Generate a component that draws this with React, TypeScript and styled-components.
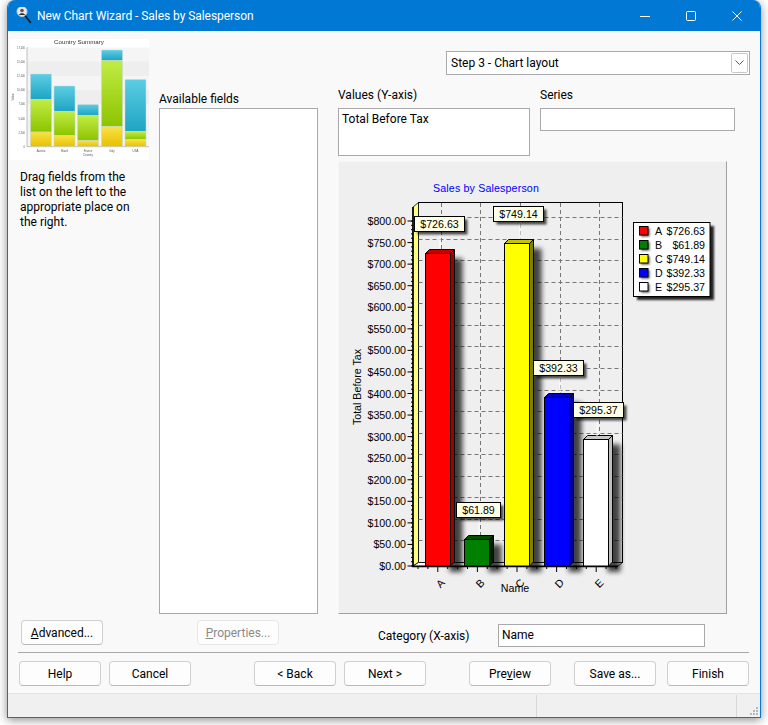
import styled, { createGlobalStyle } from "styled-components";

const GlobalStyle = createGlobalStyle`
    html, body {
        margin: 0;
        padding: 0;
        background: #ffffff;
        overflow: hidden;
    }
    * { box-sizing: border-box; }
`

const Page = styled.div`
    width: 768px;
    height: 725px;
    padding: 0 7px 7px 7px;
    font-family: Roboto, "Noto Sans", sans-serif;
    font-size: 12px;
    color: #000;
`

const Window = styled.div`
    display: flex;
    flex-direction: column;
    width: 754px;
    height: 718px;
    background: #f9f9f9;
    border: 1px solid #0078d4;
    border-top: none;
    border-radius: 8px 8px 0 0;
    box-shadow: 0 2px 10px rgba(0, 0, 0, 0.45);
    overflow: hidden;
`

const TitleBar = styled.div`
    display: flex;
    align-items: center;
    flex: none;
    height: 31px;
    padding-left: 8px;
    background: #0078d4;
    color: #fff;
    font-size: 12px;
`

const TitleText = styled.span`
    margin-left: 3px;
    flex: 1;
    letter-spacing: -0.05px;
`

const WindowButton = styled.div`
    display: flex;
    align-items: center;
    justify-content: center;
    width: 46px;
    height: 31px;
`

const Main = styled.div`
    display: grid;
    grid-template-columns: 151px 159px 1fr;
    grid-template-rows: 1fr;
    flex: 1;
    min-height: 0;
`

const LeftColumn = styled.div`
    display: flex;
    flex-direction: column;
    padding: 8px 0 7px 2px;
`

const Description = styled.p`
    width: 118px;
    margin: 10px 0 0 10px;
    line-height: 15px;
    flex: 1;
`

const MiddleColumn = styled.div`
    display: flex;
    flex-direction: column;
    padding-bottom: 7px;
`

const RightColumn = styled.div`
    display: flex;
    flex-direction: column;
    padding: 20px 0 0 20px;
`

const FieldLabel = styled.label`
    display: block;
    height: 16px;
    line-height: 16px;
`

const AvailableLabel = styled(FieldLabel)`
    margin-top: 60px;
    margin-bottom: 1px;
`

const Box = styled.div<{ $height?: number; $width?: number }>`
    height: ${(p) => (p.$height ? `${p.$height}px` : "auto")};
    width: ${(p) => (p.$width ? `${p.$width}px` : "auto")};
    padding: 2px 3px;
    line-height: 17px;
    background: #fff;
    border: 1px solid #a9a9ad;
`

const FieldList = styled(Box)`
    flex: 1;
    min-height: 0;
    margin-bottom: 6px;
`

const StepSelect = styled.div`
    display: flex;
    align-items: center;
    justify-content: space-between;
    align-self: flex-start;
    width: 304px;
    height: 24px;
    margin-left: 108px;
    padding: 0 1px 1px 4px;
    background: #fff;
    border: 1px solid #a9a9ad;
`

const SelectArrow = styled.div`
    display: flex;
    align-items: center;
    justify-content: center;
    width: 17px;
    height: 20px;
    margin-top: 1px;
    background: #fff;
    border: 1px solid #c8c8c8;
    border-radius: 2px;
`

const FieldRow = styled.div`
    display: grid;
    grid-template-columns: 192px 195px;
    column-gap: 10px;
    height: 75px;
    margin-top: 11px;
`

const FieldLabelTall = styled(FieldLabel)`
    margin-top: 1px;
    margin-bottom: 5px;
`

const ChartPanel = styled.div`
    flex: none;
    width: 389px;
    height: 453px;
    background: #efefef;
    border-top: 1px solid #f6f6f6;
    border-left: 1px solid #f6f6f6;
    border-right: 1px solid #a0a0a0;
    border-bottom: 1px solid #a0a0a0;

    svg {
        display: block;
    }
`

const CategoryRow = styled.div`
    display: flex;
    align-items: center;
    height: 23px;
    margin-top: 10px;
    padding-left: 40px;
`

const CategoryLabel = styled.label`
    width: 120px;
`

const Button = styled.button`
    width: 82px;
    height: 25px;
    padding: 0;
    font-family: inherit;
    font-size: 12px;
    color: ${(p) => (p.disabled ? "#8a8a8a" : "#000")};
    background: #fdfdfd;
    border: 1px solid ${(p) => (p.disabled ? "#e6e6e6" : "#d0d0d0")};
    border-bottom-color: ${(p) => (p.disabled ? "#e6e6e6" : "#b8b8b8")};
    border-radius: 4px;

    u {
        text-underline-offset: 1px;
    }
`

const AdvancedButton = styled(Button)`
    margin-left: 11px;
`

const PropertiesButton = styled(Button)`
    align-self: flex-start;
    margin-left: 38px;
`

const Footer = styled.div`
    flex: none;
    margin: 0 11px 0 10px;
    height: 41px;
    padding: 8px 0 0 1px;
    display: flex;
    border-top: 1px solid #a8a8a8;
`

const FooterButton = styled(Button)<{ $gap: number }>`
    margin-left: ${(p) => p.$gap}px;
`

const StatusBar = styled.div`
    display: grid;
    grid-template-columns: 529px 200px 1fr;
    flex: none;
    height: 24px;
    padding-top: 1px;
    background: #f0f0f0;
    border-top: 1px solid #e2e2e2;
`

const StatusPane = styled.div`
    display: flex;
    align-items: flex-end;
    justify-content: flex-end;
    border-right: 1px solid #d8d8d8;

    &:last-child {
        border-right: none;
        padding: 0 1px 1px 0;
    }
`

const ThumbSvg = styled.svg`
    display: block;
    flex: none;
    filter: blur(0.3px);
`

const values = [800, 750, 700, 650, 600, 550, 500, 450, 400, 350, 300, 250, 200, 150, 100, 50, 0]
const yOf = (v: number) => 566 - v * 0.43125

const bars = [
    { name: "A", value: "$726.63", x: 425.5, top: 253.5, face: "#ff0000", lid: "#c40000", side: "#a00000" },
    { name: "B", value: "$61.89", x: 464.5, top: 539.5, face: "#008000", lid: "#004d00", side: "#001f00" },
    { name: "C", value: "$749.14", x: 504.5, top: 243.5, face: "#ffff00", lid: "#c4c400", side: "#808000" },
    { name: "D", value: "$392.33", x: 544.5, top: 397.5, face: "#0000ff", lid: "#0000c4", side: "#0000a0" },
    { name: "E", value: "$295.37", x: 583.5, top: 439.5, face: "#ffffff", lid: "#c8c8c8", side: "#c0c0c0" },
]

const callouts = [
    { text: "$726.63", x: 414.5, y: 216.5, w: 50, lead: 440, to: 249 },
    { text: "$61.89", x: 456.5, y: 502.5, w: 44, lead: 479, to: 535 },
    { text: "$749.14", x: 493.5, y: 206.5, w: 50, lead: 520, to: 239 },
    { text: "$392.33", x: 533.5, y: 360.5, w: 50, lead: 560, to: 393 },
    { text: "$295.37", x: 573.5, y: 402.5, w: 50, lead: 597, to: 436 },
]

const legend = [
    { name: "A", value: "$726.63", color: "#ff0000" },
    { name: "B", value: "$61.89", color: "#008000" },
    { name: "C", value: "$749.14", color: "#ffff00" },
    { name: "D", value: "$392.33", color: "#0000ff" },
    { name: "E", value: "$295.37", color: "#ffffff" },
]

const backX = [441, 480, 520, 560, 599]
const minorY = Array.from({ length: 81 }, (_, i) => 566 - i * 4.3125)
const xTicks = Array.from({ length: 21 }, (_, i) => 418 + i * 9.9)

function SalesChart() {
    return (
        <svg width="387" height="451" viewBox="339 162 387 451" fontFamily="'Liberation Sans', Arial, sans-serif" fontSize="10.67">
            <defs>
                <filter id="soft" x="-60%" y="-40%" width="220%" height="180%">
                    <feGaussianBlur stdDeviation="2.4" />
                </filter>
                <filter id="softSmall" x="-40%" y="-40%" width="180%" height="180%">
                    <feGaussianBlur stdDeviation="1.2" />
                </filter>
            </defs>

            <text x="486" y="192" fill="#0000ff" textAnchor="middle" letterSpacing="0.15">Sales by Salesperson</text>
            <text transform="translate(361 387) rotate(-90)" textAnchor="middle">Total Before Tax</text>

            {/* back wall, left wall, floor */}
            <rect x="418.5" y="202.5" width="204" height="360" fill="#efefef" stroke="#000" />
            <polygon points="413,207 418.5,202.5 418.5,562.5 413,566" fill="#ffff80" stroke="#000" strokeWidth="0.8" />
            <polygon points="413,566 418.5,562.5 622.5,562.5 618,566" fill="#ffffff" stroke="#000" strokeWidth="0.8" />

            {values.slice(0, -1).map((v) => (
                <path
                    key={v}
                    d={`M418.5 ${Math.round(yOf(v) - 4) + 0.5}H622.5`}
                    fill="none"
                    stroke="#777"
                    strokeDasharray="4 3"
                />
            ))}
            {backX.map((x) => (
                <path key={x} d={`M${x + 0.5} 203V562`} stroke="#777" strokeDasharray="4 3" fill="none" />
            ))}

            {/* left axis with its ticks */}
            <path d="M413 207V566.5H618" fill="none" stroke="#000" strokeWidth="1.6" />
            {minorY.map((y) => (
                <path key={y} d={`M411 ${y}H413`} stroke="#000" />
            ))}
            {values.map((v) => (
                <g key={v}>
                    <path d={`M407.5 ${yOf(v)}H413`} stroke="#000" />
                    <text x="406" y={yOf(v) + 4} textAnchor="end">${v}.00</text>
                </g>
            ))}
            {xTicks.map((x, i) => (
                <path key={x} d={`M${x} 566V${i % 4 === 2 ? 572 : 569}`} stroke="#000" />
            ))}

            {/* bar shadows go under every bar */}
            {bars.map((b) => (
                <rect key={b.name} x={b.x + 24} y={b.top + 5} width="13" height={572 - b.top - 5} fill="#000" opacity="0.72" filter="url(#soft)" />
            ))}
            {bars.map((b) => (
                <g key={b.name} stroke="#000">
                    <polygon points={`${b.x},${b.top} ${b.x + 4},${b.top - 4} ${b.x + 29},${b.top - 4} ${b.x + 25},${b.top}`} fill={b.lid} />
                    <polygon points={`${b.x + 25},${b.top} ${b.x + 29},${b.top - 4} ${b.x + 29},562 ${b.x + 25},566`} fill={b.side} />
                    <rect x={b.x} y={b.top} width="25" height={566 - b.top} fill={b.face} />
                </g>
            ))}

            {callouts.map((c) => (
                <g key={c.text}>
                    <path d={`M${c.lead} ${c.y + 15}V${c.to}`} stroke="#fff" />
                    <rect x={c.x + 3} y={c.y + 3} width={c.w} height="15" fill="#000" opacity="0.7" filter="url(#softSmall)" />
                    <rect x={c.x} y={c.y} width={c.w} height="15" fill="#ffffe8" stroke="#000" />
                    <text x={c.x + c.w / 2} y={c.y + 11.5} textAnchor="middle">{c.text}</text>
                </g>
            ))}

            {/* legend */}
            <rect x="637" y="226" width="77" height="74" fill="#000" opacity="0.85" filter="url(#softSmall)" />
            <rect x="633.5" y="222.5" width="76.5" height="74" fill="#fff" stroke="#000" />
            {legend.map((l, i) => (
                <g key={l.name}>
                    <rect x="641" y={228 + i * 14} width="8.5" height="8.5" fill="#000" opacity="0.7" filter="url(#softSmall)" />
                    <rect x="639.5" y={226.5 + i * 14} width="8.5" height="8.5" fill={l.color} stroke="#000" />
                    <text x="655" y={235 + i * 14}>{l.name}</text>
                    <text x="705" y={235 + i * 14} textAnchor="end">{l.value}</text>
                </g>
            ))}

            {bars.map((b, i) => (
                <text key={b.name} transform={`translate(${441 + i * 39.7} 584) rotate(-45)`} textAnchor="middle" dominantBaseline="middle">{b.name}</text>
            ))}
            <text x="515" y="592" textAnchor="middle">Name</text>
        </svg>
    )
}

const thumbBars = [
    { x: 30.5, top: 74, mid: 99.5, low: 132 },
    { x: 54, top: 86, mid: 111.5, low: 135.5 },
    { x: 77.5, top: 104.5, mid: 115.5, low: 140.5 },
    { x: 101.5, top: 50, mid: 60.5, low: 126.5 },
    { x: 125, top: 79.5, mid: 131.5, low: 139.5 },
]
const thumbLabels = ["Austria", "Brazil", "France", "Italy", "USA"]
const thumbTicks = ["17,500", "15,000", "12,500", "10,000", "7,500", "5,000", "2,500", "0"]

function ThumbChart() {
    return (
        <ThumbSvg width="139" height="121" viewBox="10 39 139 121" fontFamily="'Liberation Sans', Arial, sans-serif">
            <defs>
                <linearGradient id="tBlue" x1="0" y1="0" x2="0" y2="1">
                    <stop offset="0" stopColor="#5ccde4" />
                    <stop offset="1" stopColor="#1ea4c2" />
                </linearGradient>
                <linearGradient id="tGreen" x1="0" y1="0" x2="0" y2="1">
                    <stop offset="0" stopColor="#c2ec45" />
                    <stop offset="1" stopColor="#8cc400" />
                </linearGradient>
                <linearGradient id="tYellow" x1="0" y1="0" x2="0" y2="1">
                    <stop offset="0" stopColor="#f8e245" />
                    <stop offset="1" stopColor="#e8c000" />
                </linearGradient>
            </defs>
            <rect x="10" y="39" width="139" height="121" fill="#fff" />
            <text x="79" y="43.5" fontSize="6.2" textAnchor="middle" fill="#333">Country Summary</text>
            <rect x="27" y="47.5" width="122" height="99" fill="#f5f5f5" />
            <rect x="27" y="61.6" width="122" height="14.2" fill="#eeeeee" />
            <rect x="27" y="90" width="122" height="14.2" fill="#eeeeee" />
            <rect x="27" y="118.4" width="122" height="14.2" fill="#f1f1f1" />
            <path d="M27 146.7H149M27 47V147" stroke="#999" strokeWidth="0.6" />
            {thumbTicks.map((t, i) => (
                <text key={t} x="25" y={48.5 + i * 14.2} fontSize="2.6" textAnchor="end" fill="#555">{t}</text>
            ))}
            <text transform="translate(13.5 97) rotate(-90)" fontSize="2.8" textAnchor="middle" fill="#555">Value</text>
            {thumbBars.map((b) => (
                <g key={b.x} stroke="#c8d8d8" strokeWidth="0.5">
                    <rect x={b.x} y={b.top} width="21" height={b.mid - b.top} rx="1" fill="url(#tBlue)" />
                    <rect x={b.x} y={b.mid} width="21" height={b.low - b.mid} fill="url(#tGreen)" />
                    <rect x={b.x} y={b.low} width="21" height={146.5 - b.low} fill="url(#tYellow)" />
                </g>
            ))}
            {thumbBars.map((b, i) => (
                <text key={b.x} x={b.x + 10.5} y="151.5" fontSize="2.8" textAnchor="middle" fill="#555">{thumbLabels[i]}</text>
            ))}
            <text x="88" y="156" fontSize="2.8" textAnchor="middle" fill="#555">Country</text>
        </ThumbSvg>
    )
}

function WizardIcon() {
    return (
        <svg width="18" height="18" viewBox="0 0 18 18">
            <path d="M9 8.5L14.5 15.5" stroke="#111" strokeWidth="1.5" strokeLinecap="round" />
            <circle cx="6" cy="4.5" r="5" fill="#e4e9ef" stroke="#c8d0d8" />
            <circle cx="6" cy="3.5" r="1.8" fill="#7a4a35" />
            <path d="M3 8C3.5 5.8 8.5 5.8 9 8Z" fill="#3a2420" />
        </svg>
    )
}

function App() {
    return (
        <Page>
            <GlobalStyle />
            <Window>
                <TitleBar>
                    <WizardIcon />
                    <TitleText>New Chart Wizard - Sales by Salesperson</TitleText>
                    <WindowButton>
                        <svg width="10" height="10" viewBox="0 0 10 10"><path d="M0 5.5H10" stroke="#fff" /></svg>
                    </WindowButton>
                    <WindowButton>
                        <svg width="10" height="10" viewBox="0 0 10 10"><rect x="0.5" y="0.5" width="9" height="9" rx="1" fill="none" stroke="#fff" /></svg>
                    </WindowButton>
                    <WindowButton>
                        <svg width="10" height="10" viewBox="0 0 10 10"><path d="M0.5 0.5L9.5 9.5M9.5 0.5L0.5 9.5" stroke="#fff" /></svg>
                    </WindowButton>
                </TitleBar>
                <Main>
                    <LeftColumn>
                        <ThumbChart />
                        <Description>Drag fields from the list on the left to the appropriate place on the right.</Description>
                        <AdvancedButton><u>A</u>dvanced...</AdvancedButton>
                    </LeftColumn>
                    <MiddleColumn>
                        <AvailableLabel>Available fields</AvailableLabel>
                        <FieldList />
                        <PropertiesButton disabled><u>P</u>roperties...</PropertiesButton>
                    </MiddleColumn>
                    <RightColumn>
                        <StepSelect>
                            Step 3 - Chart layout
                            <SelectArrow>
                                <svg width="9" height="6" viewBox="0 0 9 6"><path d="M0.5 0.5L4.5 4.5L8.5 0.5" fill="none" stroke="#555" /></svg>
                            </SelectArrow>
                        </StepSelect>
                        <FieldRow>
                            <div>
                                <FieldLabelTall>Values (Y-axis)</FieldLabelTall>
                                <Box $height={48}>Total Before Tax</Box>
                            </div>
                            <div>
                                <FieldLabelTall>Series</FieldLabelTall>
                                <Box $height={23} />
                            </div>
                        </FieldRow>
                        <ChartPanel>
                            <SalesChart />
                        </ChartPanel>
                        <CategoryRow>
                            <CategoryLabel>Category (X-axis)</CategoryLabel>
                            <Box $height={23} $width={207}>Name</Box>
                        </CategoryRow>
                    </RightColumn>
                </Main>
                <Footer>
                    <FooterButton $gap={0}>Help</FooterButton>
                    <FooterButton $gap={8}>Cancel</FooterButton>
                    <FooterButton $gap={63}>&lt; Back</FooterButton>
                    <FooterButton $gap={8}>Next &gt;</FooterButton>
                    <FooterButton $gap={43}>Pre<u>v</u>iew</FooterButton>
                    <FooterButton $gap={23}>Save as...</FooterButton>
                    <FooterButton $gap={11}>Finish</FooterButton>
                </Footer>
                <StatusBar>
                    <StatusPane />
                    <StatusPane />
                    <StatusPane>
                        <svg width="10" height="10" viewBox="0 0 10 10" fill="#b8b8b8">
                            <rect x="7" y="1" width="2" height="2" />
                            <rect x="4" y="4" width="2" height="2" />
                            <rect x="7" y="4" width="2" height="2" />
                            <rect x="1" y="7" width="2" height="2" />
                            <rect x="4" y="7" width="2" height="2" />
                            <rect x="7" y="7" width="2" height="2" />
                        </svg>
                    </StatusPane>
                </StatusBar>
            </Window>
        </Page>
    )
}

export default App
